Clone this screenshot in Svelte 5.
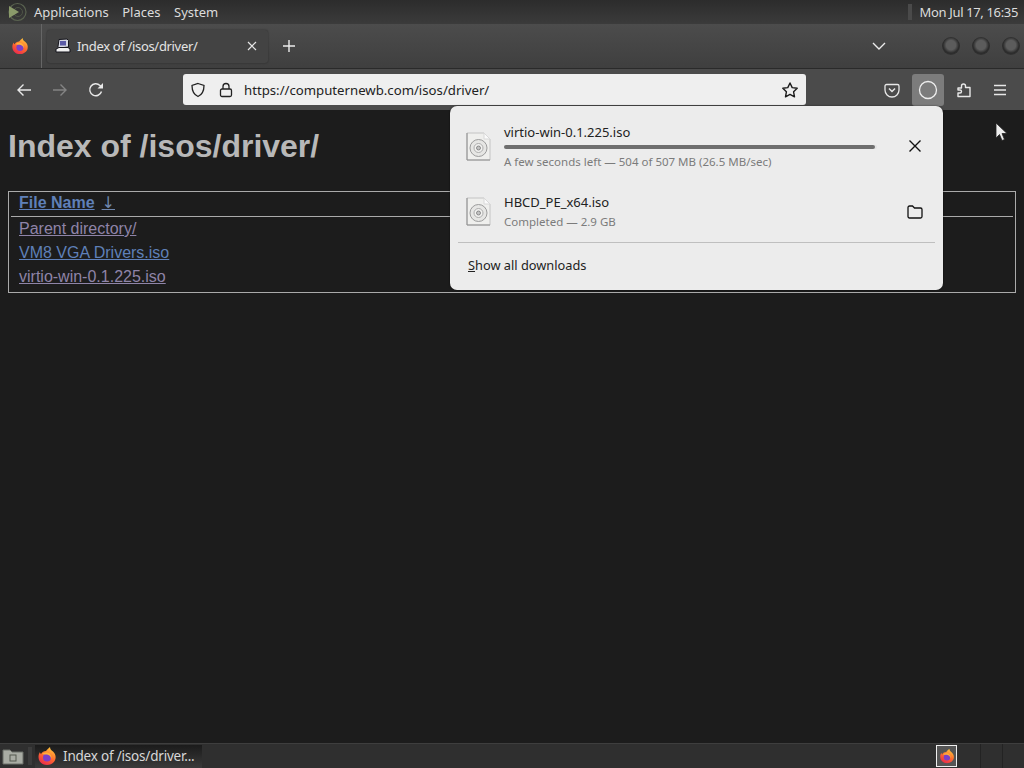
<script>
  const panelMenus = ['Applications', 'Places', 'System'];
  const rows = [
    { label: 'Parent directory/', cls: 'visited' },
    { label: 'VM8 VGA Drivers.iso', cls: 'link' },
    { label: 'virtio-win-0.1.225.iso', cls: 'visited' }
  ];
</script>

{#snippet fox(size)}
  <svg width={size} height={size} viewBox="0 0 20 20">
    <defs>
      <linearGradient id="fx" x1="0.7" y1="0" x2="0.2" y2="1">
        <stop offset="0" stop-color="#ffc83a" />
        <stop offset="0.5" stop-color="#ff6a2e" />
        <stop offset="1" stop-color="#e8254f" />
      </linearGradient>
    </defs>
    <path fill="url(#fx)" d="M13 1c0 2 1 3 3 4.500 2 2 3 4 2.500 7C18 16 14.500 19 10 19 5 19 1.500 15.500 1.500 11c0-2 .5-3.500 1.500-5 0 1 .5 1.500 1 2C5 6 7 5 9 5c1-1.500 2.500-2.500 4-4z" />
    <circle cx="10" cy="11.500" r="4" fill="#7b3fc8" />
    <path fill="#ffb03a" d="M5 8c2-2 6-2 8 0 1 1 2 3 1 5 0-3-2-4-4-4.500-2 0-3 0-5-.5z" />
  </svg>
{/snippet}

{#snippet fileIcon()}
  <svg class="file" width="25" height="29" viewBox="0 0 25 29">
    <path d="M1 1h17l6 6v21H1z" fill="#efefed" stroke="#c4c4c4" />
    <path d="M1 1v27h23" fill="none" stroke="#8e8e8e" />
    <path d="M18 1l6 6M18 1v6h6" fill="#fafafa" stroke="#d8d8d8" />
    <circle cx="12.500" cy="16" r="8.500" fill="#e6e6e4" stroke="#9c9c9c" />
    <circle cx="12.500" cy="16" r="4.500" fill="#f2f2f0" stroke="#acacac" />
    <circle cx="12.500" cy="16" r="2" fill="#c4c4c4" stroke="#777" stroke-width="0.800" />
  </svg>
{/snippet}

<div class="screen">
  <header class="panel">
    <svg class="logo" width="20" height="20" viewBox="0 0 20 20">
      <circle cx="10.500" cy="10" r="8.500" fill="none" stroke="#5a6350" stroke-width="1.200" />
      <circle cx="11" cy="10" r="4.500" fill="none" stroke="#4e5546" />
      <path d="M2 4l10 6-10 6z" fill="#8a9a6a" />
    </svg>
    <nav class="menus">
      {#each panelMenus as m}<span>{m}</span>{/each}
    </nav>
    <div class="clock">
      <span class="grip"></span>
      <span class="time">Mon Jul 17, 16:35</span>
    </div>
  </header>

  <div class="tabbar">
    <div class="fox-btn">{@render fox(18)}</div>
    <div class="tab">
      <svg width="16" height="16" viewBox="0 0 16 16">
        <path d="M4 1.500L12 1l1.500 1.500V9l-9 1L3 8.500z" fill="#d6d8e2" stroke="#15151c" />
        <rect x="5" y="3" width="6" height="4.500" fill="#5a5aa6" />
        <path d="M1 11l3-1.500h9l2 1.500v3H1z" fill="#f0f0f0" stroke="#15151c" />
      </svg>
      <span class="tab-title">Index of /isos/driver/</span>
      <svg class="close" width="10" height="10" viewBox="0 0 10 10"><path d="M1 1l8 8M9 1l-8 8" stroke="#e6e6e6" stroke-width="1.200" /></svg>
    </div>
    <svg class="plus" width="14" height="14" viewBox="0 0 14 14"><path d="M7 1v12M1 7h12" stroke="#ececec" stroke-width="1.400" /></svg>
    <svg class="chev" width="14" height="8" viewBox="0 0 14 8"><path d="M1 1l6 6 6-6" fill="none" stroke="#ececec" stroke-width="1.400" /></svg>
    <div class="wm">
      <span></span><span></span><span></span>
    </div>
  </div>

  <div class="navbar">
    <svg class="nav-ic" width="16" height="16" viewBox="0 0 16 16"><path d="M15 8H2M7.500 2.500L2 8l5.500 5.500" fill="none" stroke="#e8e8e8" stroke-width="1.400" /></svg>
    <svg class="nav-ic" width="16" height="16" viewBox="0 0 16 16"><path d="M1 8h13M8.500 2.500L14 8l-5.500 5.500" fill="none" stroke="#848484" stroke-width="1.400" /></svg>
    <svg class="nav-ic" width="16" height="16" viewBox="0 0 16 16"><path d="M13.500 9.500A6 6 0 1 1 12 3.500L14 5.500" fill="none" stroke="#e8e8e8" stroke-width="1.400" /><path d="M15 1v5.500H9.500z" fill="#e8e8e8" /></svg>
    <div class="urlbar">
      <svg width="16" height="16" viewBox="0 0 16 16"><path d="M8 1.500l6 2c0 5-1.500 9-6 11-4.500-2-6-6-6-11z" fill="none" stroke="#222" stroke-width="1.300" /></svg>
      <svg class="lock" width="14" height="16" viewBox="0 0 14 16"><rect x="1.500" y="7" width="11" height="7.500" rx="1.500" fill="none" stroke="#222" stroke-width="1.300" /><path d="M4 7V4.500a3 3 0 0 1 6 0V7" fill="none" stroke="#222" stroke-width="1.300" /></svg>
      <span class="url">https://computernewb.com/isos/driver/</span>
      <svg width="18" height="18" viewBox="0 0 18 18"><path d="M9 2l2.200 4.600 5 .7-3.600 3.500.9 5L9 13.400l-4.500 2.400.9-5L1.800 7.300l5-.7z" fill="none" stroke="#1c1c1c" stroke-width="1.400" stroke-linejoin="round" /></svg>
    </div>
    <div class="tools">
      <span class="tool"><svg width="16" height="16" viewBox="0 0 16 16"><path d="M2.500 2.500h11A1.500 1.500 0 0 1 15 4v4A7 7 0 0 1 1 8V4a1.500 1.500 0 0 1 1.500-1.500z" fill="none" stroke="#e8e8e8" stroke-width="1.300" /><path d="M5 6.500l3 3 3-3" fill="none" stroke="#e8e8e8" stroke-width="1.500" /></svg></span>
      <span class="tool active"><svg width="20" height="20" viewBox="0 0 20 20"><circle cx="10" cy="10" r="8.500" fill="none" stroke="#eee" stroke-width="1.300" /></svg></span>
      <span class="tool"><svg width="16" height="16" viewBox="0 0 16 16"><path d="M2 6h3.500V4a2 2 0 0 1 4 0v1.500H14v9H2v-3.500h2a1.500 1.500 0 0 0 0-3H2z" fill="none" stroke="#e8e8e8" stroke-width="1.400" stroke-linejoin="round" /></svg></span>
      <span class="tool"><svg width="16" height="16" viewBox="0 0 16 16"><path d="M2 3.500h12M2 8h12M2 12.500h12" stroke="#e8e8e8" stroke-width="1.300" /></svg></span>
    </div>
  </div>

  <main class="page">
    <h1>Index of /isos/driver/</h1>
    <div class="listing">
      <div class="head"><span class="link bold">File Name</span><span class="link arrow">↓</span></div>
      {#each rows as r}
        <div class="row"><span class={r.cls}>{r.label}</span></div>
      {/each}
    </div>
  </main>

  <footer class="taskbar">
    <svg class="drawer" width="24" height="18" viewBox="0 0 24 18"><path d="M2 3h7l2 2h11v12H2z" fill="#a9aca4" stroke="#6b6e68" /><rect x="9" y="8" width="6" height="6" fill="none" stroke="#55584f" /></svg>
    <div class="grip2"></div>
    <div class="task">{@render fox(20)}<span class="task-title">Index of /isos/driver...</span></div>
    <div class="tray">
      <span class="pager">{@render fox(16)}</span>
      <i></i><i></i>
    </div>
  </footer>

  <section class="popup">
    <div class="dl first">
      {@render fileIcon()}
      <div class="dl-body">
        <div class="name">virtio-win-0.1.225.iso</div>
        <div class="bar"><div class="fill" style="width: 99.4%"></div></div>
        <div class="meta">A few seconds left — 504 of 507 MB (26.5 MB/sec)</div>
      </div>
      <svg class="action x" width="14" height="14" viewBox="0 0 14 14"><path d="M1.500 1.500l11 11M12.500 1.500l-11 11" stroke="#111" stroke-width="1.400" /></svg>
    </div>
    <div class="dl second">
      {@render fileIcon()}
      <div class="dl-body">
        <div class="name">HBCD_PE_x64.iso</div>
        <div class="meta done">Completed — 2.9 GB</div>
      </div>
      <svg class="action" width="16" height="14" viewBox="0 0 16 14"><path d="M1 2.500A1.500 1.500 0 0 1 2.500 1h3l2 2h6A1.500 1.500 0 0 1 15 4.500V11.500A1.500 1.500 0 0 1 13.500 13h-11A1.500 1.500 0 0 1 1 11.500z" fill="none" stroke="#111" stroke-width="1.300" /></svg>
    </div>
    <div class="all"><span><u>S</u>how all downloads</span></div>
  </section>

  <svg class="cursor" width="13" height="20" viewBox="0 0 13 20"><path d="M1 1v15l3.500-3.500 2.500 6 2.500-1-2.500-6h5z" fill="#eee" stroke="#222" stroke-width="0.800" /></svg>
</div>

<style>
  :global(body) { margin: 0; background: #1c1c1c; }
  .screen {
    position: relative;
    width: 1024px;
    height: 768px;
    overflow: hidden;
    display: flex;
    flex-direction: column;
    font-family: "Noto Sans", "Open Sans", sans-serif;
    background: #1c1c1c;
  }

  .panel {
    height: 24px;
    flex: none;
    display: flex;
    align-items: center;
    padding: 0 6px 0 7px;
    background: linear-gradient(#2c2c2c, #3b3b3b);
    color: #dcdcdc;
    font-size: 13px;
  }
  .menus { display: flex; gap: 13.500px; margin-left: 7px; }
  .clock { margin-left: auto; display: flex; align-items: center; gap: 8px; }
  .time { letter-spacing: -0.350px; }
  .grip { width: 4px; height: 16px; background: #4a4a4a; }

  .tabbar {
    height: 45px;
    flex: none;
    box-sizing: border-box;
    border-bottom: 1px solid #2a2a2a;
    display: flex;
    align-items: center;
    background: linear-gradient(#4c4c4c, #3f3f3f);
    color: #e4e4e4;
    font-size: 13px;
  }
  .fox-btn {
    width: 42px;
    height: 100%;
    box-sizing: border-box;
    padding-left: 11px;
    display: flex;
    align-items: center;
    border-right: 1px solid #666;
  }
  .tab {
    width: 221px;
    height: 33px;
    margin-left: 5px;
    box-sizing: border-box;
    padding: 0 11px 0 8px;
    display: flex;
    align-items: center;
    gap: 6px;
    background: #434343;
    border-radius: 3px;
    box-shadow: 0 0 2px rgba(0,0,0,.4);
  }
  .tab-title { flex: 1; letter-spacing: -0.330px; }
  .plus { margin-left: 14px; }
  .chev { margin-left: 576px; }
  .wm { display: flex; gap: 12px; margin-left: auto; margin-right: 4px; }
  .wm span {
    width: 18px;
    height: 18px;
    border-radius: 50%;
    background: radial-gradient(circle at 50% 45%, #5c5c5c 35%, #2b2b2b 60%, #3a3a3a 90%);
  }

  .navbar {
    height: 41px;
    flex: none;
    display: flex;
    align-items: center;
    padding-left: 16px;
    background: #4b4b4b;
  }
  .nav-ic { margin-right: 20px; }
  .nav-ic + .nav-ic + .nav-ic { margin-right: 0; }
  .urlbar {
    width: 623px;
    height: 31px;
    margin-left: 79px;
    box-sizing: border-box;
    padding: 0 7px;
    display: flex;
    align-items: center;
    background: #efefef;
    border-radius: 3px;
    color: #222;
    font-size: 13.200px;
  }
  .lock { margin-left: 13px; }
  .url { flex: 1; margin-left: 11px; }
  .tools { display: flex; margin-left: 70px; }
  .tool {
    width: 32px;
    height: 32px;
    margin-right: 4px;
    display: flex;
    align-items: center;
    justify-content: center;
    border-radius: 3px;
  }
  .active { background: #7c7c7c; }

  .page {
    flex: 1;
    background: #1c1c1c;
    padding: 0 8px;
    font-family: "Liberation Sans", Arial, sans-serif;
    color: #b4b4b4;
    font-size: 16px;
  }
  h1 {
    margin: 18px 0 26px;
    font-size: 32px;
    line-height: 37px;
    color: #b8b8b8;
  }
  .listing {
    border: 1px solid #aaa;
    height: 102px;
    box-sizing: border-box;
    padding: 2px;
  }
  .head {
    height: 22px;
    line-height: 18px;
    border-bottom: 1px solid #aaa;
    padding-left: 8px;
  }
  .row { height: 24px; line-height: 22px; padding-left: 8px; }
  .row:nth-child(2) { margin-top: 1px; }
  .link { color: #5f80b8; text-decoration: underline; }
  .visited { color: #8f84a8; text-decoration: underline; }
  .bold { font-weight: bold; }
  .arrow {
    margin-left: 7px;
    font-family: "DejaVu Sans", sans-serif;
    color: #6f86ac;
  }

  .taskbar {
    height: 25px;
    flex: none;
    display: flex;
    align-items: center;
    background: #2f2f2f;
    border-top: 1px solid #3e3e3e;
    box-sizing: border-box;
    color: #d8d8d8;
    font-size: 13.500px;
  }
  .drawer { margin-left: 1px; }
  .grip2 { width: 4px; height: 18px; margin-left: 3px; background: #3c3c3c; }
  .task {
    width: 167px;
    height: 23px;
    margin-left: 3px;
    box-sizing: border-box;
    padding-left: 2px;
    display: flex;
    align-items: center;
    gap: 6px;
    background: linear-gradient(#1b1b1b, #3a3a3a);
  }
  .task-title { white-space: nowrap; letter-spacing: -0.200px; }
  .tray { margin-left: auto; display: flex; align-items: center; height: 100%; padding-right: 21px; }
  .pager {
    width: 21px;
    height: 22px;
    box-sizing: border-box;
    border: 1px solid #eee;
    display: flex;
    align-items: center;
    justify-content: center;
    background: #555;
    margin-right: 23px;
  }
  .tray i { width: 1px; height: 100%; background: #232323; margin-right: 21px; }
  .tray i:last-child { margin-right: 0; }

  .popup {
    position: absolute;
    left: 450px;
    top: 106px;
    width: 493px;
    height: 184px;
    box-sizing: border-box;
    background: #ececec;
    border-radius: 7px;
    color: #222;
    font-size: 13px;
    box-shadow: 0 0 2px rgba(0,0,0,.6);
    padding: 0 8px;
  }
  .dl { display: flex; align-items: center; padding-left: 8px; box-sizing: border-box; }
  .first { height: 80px; }
  .second { height: 57px; padding-bottom: 5px; border-bottom: 1px solid #bfbfbf; }
  .dl-body { margin-left: 13px; flex: 1; }
  .name { line-height: 18px; }
  .bar { width: 373px; height: 4px; margin: 4px 0 4px; background: #e2e2e2; border-radius: 2px; }
  .fill { height: 100%; background: #6e6e6e; border-radius: 2px; }
  .meta { font-size: 11.500px; color: #7b7b7b; line-height: 17px; }
  .done { margin-top: 2px; }
  .action { margin-right: 12px; }
  .x { margin-right: 13px; }
  .all { padding-left: 10px; height: 43px; display: flex; align-items: center; font-size: 12.800px; }

  .cursor { position: absolute; left: 995px; top: 122px; }
</style>
